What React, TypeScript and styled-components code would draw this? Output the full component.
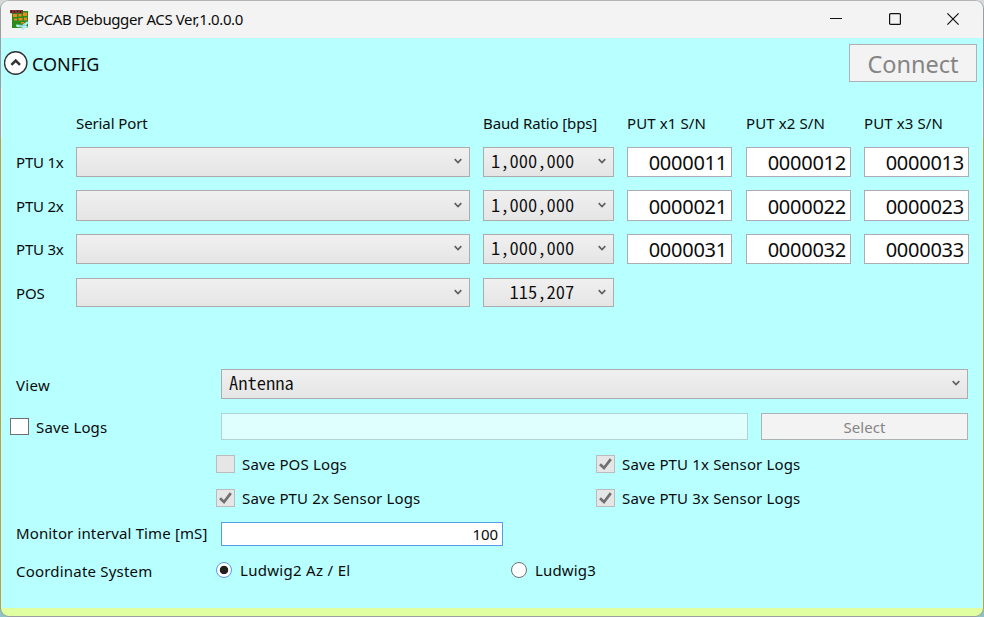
import React from "react";
import styled, { createGlobalStyle, css } from "styled-components";

const Global = createGlobalStyle`
  * { box-sizing: border-box; }
  html, body { margin: 0; padding: 0; }
  body {
    width: 984px;
    height: 617px;
    overflow: hidden;
    background: linear-gradient(#d8d8d8 0, #d8d8d8 50%, #8fc4c6 51%);
    font-family: "Noto Sans", "Open Sans", sans-serif;
    font-size: 15px;
    color: #0b0b0b;
  }
`;

const Window = styled.div`
  width: 984px;
  height: 617px;
  display: flex;
  flex-direction: column;
  border: 1px solid #9b9fa0;
  border-top-color: #b4b4b4;
  border-radius: 9px;
  overflow: hidden;
  background: linear-gradient(#b8ffff 0, #b8ffff 87px, #e4fbfb 87px, #e4fbfb 137px, #e0ffa0 137px);
`;

const TitleBar = styled.header`
  height: 37px;
  flex: none;
  display: flex;
  align-items: center;
  padding: 0 24px 0 9px;
  background: #f3f3f3;
`;

const Text = styled.span<{ $size?: number; $track?: number; $drop?: number }>`
  display: block;
  white-space: pre;
  line-height: 20px;
  font-size: ${(p) => p.$size ?? 15}px;
  letter-spacing: ${(p) => p.$track ?? 0}px;
  transform: translateY(${(p) => p.$drop ?? 0}px);
`;

const Title = styled(Text)`
  margin-left: 5px;
  flex: 1;
`;

const Captions = styled.div`
  display: flex;
  gap: 46.5px;
  transform: translateY(-1px);
  svg { display: block; }
`;

const Content = styled.main`
  flex: 1;
  margin: 0 1px 8px;
  background: #b8ffff;
  padding: 6px 14px 0 14px;
`;

const Head = styled.div`
  display: flex;
  justify-content: space-between;
  height: 38px;
  margin: 0 -9px 0 -12px;
`;

const Expander = styled.div`
  display: flex;
  align-items: center;
  gap: 4px;
  svg { display: block; }
`;

const Button = styled.button<{ $w: number; $h: number }>`
  width: ${(p) => p.$w}px;
  height: ${(p) => p.$h}px;
  padding: 0;
  display: flex;
  align-items: center;
  justify-content: center;
  border: 1px solid #adb2b5;
  background: #f3f3f3;
  color: #858585;
  font-family: inherit;
`;

const PortGrid = styled.div`
  display: grid;
  grid-template-columns: 60px 407px 144px 119px 118px 105px;
  grid-template-rows: 33px 43px 44px 44px 29px;
  margin-top: 32px;
`;

const Cell = styled.div<{ $w?: number; $h?: number }>`
  width: ${(p) => (p.$w ? p.$w + "px" : "auto")};
  height: ${(p) => p.$h ?? 30}px;
  display: flex;
  align-items: center;
`;

const comboFace = css`
  border: 1px solid #acacac;
  background: linear-gradient(#f0f0f0, #e5e5e5);
`;

const Combo = styled(Cell)`
  ${comboFace}
  justify-content: space-between;
  padding: 0 7px 0 8px;
  svg { display: block; margin-bottom: 1px; }
`;

const Mono = styled.span`
  white-space: pre;
  font-family: "Noto Sans CJK JP", sans-serif;
  font-feature-settings: "hwid";
  font-size: 18.5px;
  font-weight: 350;
  line-height: 20px;
  transform: translate(-1px, -2px);
`;

const Serial = styled(Cell)`
  justify-content: flex-end;
  border: 1px solid #abadb3;
  background: #fff;
  padding-right: 4px;
`;

const Row = styled.div<{ $h: number; $top: number }>`
  display: grid;
  grid-template-columns: 205px 1fr;
  align-items: center;
  height: ${(p) => p.$h}px;
  margin-top: ${(p) => p.$top}px;
`;

const PathGroup = styled.div`
  display: flex;
  justify-content: space-between;
`;

const PathBox = styled.div`
  width: 527px;
  height: 27px;
  border: 1px solid #b0d3d6;
  background: #dfffff;
`;

const Options = styled.div<{ $left: number; $col: number; $top: number }>`
  display: grid;
  grid-template-columns: ${(p) => p.$col}px auto;
  row-gap: 14px;
  margin: ${(p) => p.$top}px 0 0 ${(p) => p.$left}px;
`;

const Option = styled.label<{ $gap: number }>`
  display: flex;
  align-items: center;
  gap: ${(p) => p.$gap}px;
  height: 20px;
`;

const SaveOption = styled(Option)`
  margin-left: -6px;
`;

const Box = styled.span<{ $off?: boolean; $h?: number }>`
  width: 19px;
  height: ${(p) => p.$h ?? 18}px;
  display: flex;
  align-items: center;
  justify-content: center;
  border: 1px solid ${(p) => (p.$off ? "#bcbcbc" : "#707070")};
  background: ${(p) => (p.$off ? "#e6e6e6" : "#fff")};
  svg { display: block; }
`;

const Radio = styled.span<{ $on?: boolean }>`
  width: 16px;
  height: 16px;
  border-radius: 50%;
  border: 1px solid ${(p) => (p.$on ? "#5a96f0" : "#707070")};
  background: ${(p) => (p.$on ? "radial-gradient(circle, #212121 0 3.8px, #fff 4.6px)" : "#fff")};
`;

const Interval = styled.div`
  width: 282px;
  height: 24px;
  display: flex;
  align-items: center;
  justify-content: flex-end;
  padding-right: 4px;
  border: 1px solid #569de5;
  background: #fff;
`;

const Chevron = () => (
  <svg width="8" height="7" viewBox="0 0 8 7" fill="none" stroke="#606060" strokeWidth="1.7">
    <path d="M0.7 1.2 L4 4.6 L7.3 1.2" />
  </svg>
);

const Tick = () => (
  <svg width="15" height="14" viewBox="0 0 15 14" fill="none" stroke="#707070" strokeWidth="2.7">
    <path d="M2 7.2 L6 11 L12.8 2.2" />
  </svg>
);

const AppIcon = () => (
  <svg width="20" height="20" viewBox="0 0 20 20">
    <rect x="2" y="1" width="16" height="17" fill="#2c8a1c" />
    <path d="M3 4h4v3H3zM8.500 4h3v2.500h-3zM13 2.500h4v3.500h-4zM4 8.500h3v2H4zM8.500 8h4v2.500h-4zM14 7.500h3v3h-3zM11 12h3v1.500h-3z" fill="#e88a1c" />
    <path d="M0 0h13v3.200H0z" fill="#7a3a35" />
    <path d="M1.500 .5v2.500M4.500 1v1.500M7.500 .5v1.500M10.500 1v2" stroke="#4a1116" strokeWidth="1.200" />
    <path d="M6 14.500l6 .5 5-3.500 2 .5-3 3.500 3 2-4 .5-1 2-3-.5 1.500-2-6-.5z" fill="#b5eef2" />
    <path d="M9 16.300l6-1.300" stroke="#6bb6b9" strokeWidth=".8" />
  </svg>
);

const ports = [
  { name: "PTU 1x", baud: "1,000,000", h: 30, sn: ["0000011", "0000012", "0000013"] },
  { name: "PTU 2x", baud: "1,000,000", h: 31, sn: ["0000021", "0000022", "0000023"] },
  { name: "PTU 3x", baud: "1,000,000", h: 30, sn: ["0000031", "0000032", "0000033"] },
  { name: "POS", baud: "  115,207", h: 29, sn: [] },
];

const logs = [
  { name: "Save POS Logs", on: false },
  { name: "Save PTU 1x Sensor Logs", on: true },
  { name: "Save PTU 2x Sensor Logs", on: true },
  { name: "Save PTU 3x Sensor Logs", on: true },
];

export default function App() {
  return (
    <>
      <Global />
      <Window>
        <TitleBar>
          <AppIcon />
          <Title $size={15} $track={-0.38} $drop={-1}>PCAB Debugger ACS Ver,1.0.0.0</Title>
          <Captions>
            <svg width="12" height="12"><path d="M0 5.5h12" stroke="#111" /></svg>
            <svg width="12" height="12"><rect x=".6" y=".6" width="10.8" height="10.8" rx="1" fill="none" stroke="#111" strokeWidth="1.2" /></svg>
            <svg width="12" height="12"><path d="M.4.4l11.2 11.2M11.6.4L.4 11.6" stroke="#111" strokeWidth="1.2" /></svg>
          </Captions>
        </TitleBar>
        <Content>
          <Head>
            <Expander>
              <svg width="24" height="24" viewBox="0 0 24 24">
                <circle cx="11.700" cy="12" r="11.200" fill="#fff" stroke="#333" strokeWidth="1.4" />
                <path d="M7.400 13.800l4.300-4.200 4.300 4.200" fill="none" stroke="#333" strokeWidth="2.5" />
              </svg>
              <Text $size={18} $drop={1}>CONFIG</Text>
            </Expander>
            <Button $w={128} $h={38} disabled>
              <Text $size={23.5} $drop={1}>Connect</Text>
            </Button>
          </Head>
          <PortGrid>
            <span />
            <Text $drop={-1} $track={-0.1}>Serial Port</Text>
            <Text $drop={-1} $track={-0.12}>Baud Ratio [bps]</Text>
            <Text $drop={-1} $track={0.1}>PUT x1 S/N</Text>
            <Text $drop={-1} $track={0.1}>PUT x2 S/N</Text>
            <Text $drop={-1} $track={0.1}>PUT x3 S/N</Text>
            {ports.map((p) => (
              <React.Fragment key={p.name}>
                <Cell $h={p.h}><Text $track={-0.2}>{p.name}</Text></Cell>
                <Combo $w={394} $h={p.h}><span /><Chevron /></Combo>
                <Combo $w={131} $h={p.h}><Mono>{p.baud}</Mono><Chevron /></Combo>
                {p.sn.map((s) => (
                  <Serial key={s} $w={105} $h={p.h}><Text $size={20} $track={-0.25} $drop={1}>{s}</Text></Serial>
                ))}
              </React.Fragment>
            ))}
          </PortGrid>
          <Row $h={30} $top={62}>
            <Text $drop={1} $track={0.3}>View</Text>
            <Combo $h={30}><Mono>Antenna</Mono><Chevron /></Combo>
          </Row>
          <Row $h={27} $top={14}>
            <SaveOption $gap={7}><Box $h={17} /><Text $track={0.15}>Save Logs</Text></SaveOption>
            <PathGroup>
              <PathBox />
              <Button $w={207} $h={27} disabled><Text $track={0.1}>Select</Text></Button>
            </PathGroup>
          </Row>
          <Options $left={200} $col={380} $top={14}>
            {logs.map((l) => (
              <Option key={l.name} $gap={7}>
                <Box $off>{l.on && <Tick />}</Box>
                <Text $track={0.15}>{l.name}</Text>
              </Option>
            ))}
          </Options>
          <Row $h={24} $top={14}>
            <Text $drop={-1} $track={0.13}>Monitor interval Time [mS]</Text>
            <Interval><Text $track={-0.1}>100</Text></Interval>
          </Row>
          <Row $h={20} $top={14}>
            <Text $drop={1} $track={0.2}>Coordinate System</Text>
            <Options $left={-5} $col={295} $top={0}>
              <Option $gap={8}><Radio $on /><Text $track={0.3}>Ludwig2 Az / El</Text></Option>
              <Option $gap={8}><Radio /><Text $track={0.15}>Ludwig3</Text></Option>
            </Options>
          </Row>
        </Content>
      </Window>
    </>
  );
}
